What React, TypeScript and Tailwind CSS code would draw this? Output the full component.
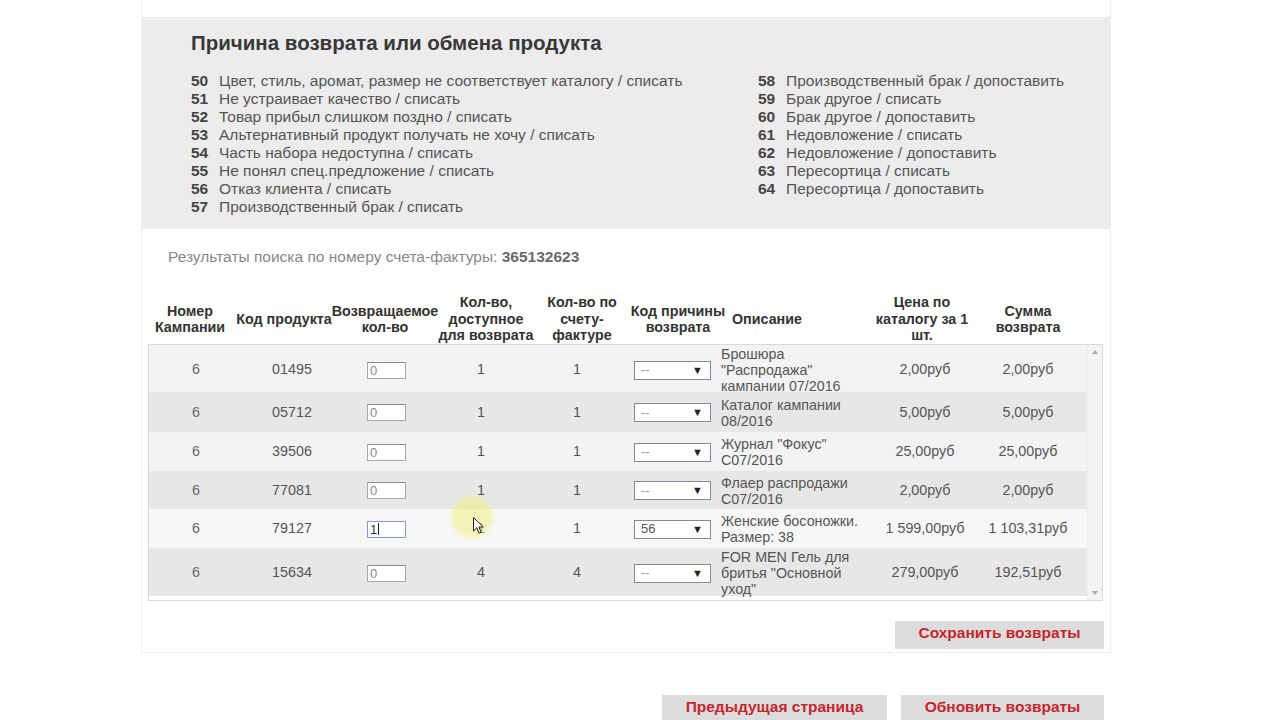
import React from 'react';

type Row = {
  c: string;
  code: string;
  q: string;
  avail: string;
  inv: string;
  reason: string;
  desc: string[];
  price: string;
  sum: string;
  h: string;
  bg: string;
  focus?: boolean;
};

const rows: Row[] = [
  { c: '6', code: '01495', q: '0', avail: '1', inv: '1', reason: '--', desc: ['Брошюра', '"Распродажа"', 'кампании 07/2016'], price: '2,00руб', sum: '2,00руб', h: 'h-[47px]', bg: 'bg-[#f3f3f3]' },
  { c: '6', code: '05712', q: '0', avail: '1', inv: '1', reason: '--', desc: ['Каталог кампании', '08/2016'], price: '5,00руб', sum: '5,00руб', h: 'h-[40px]', bg: 'bg-[#e7e7e7]' },
  { c: '6', code: '39506', q: '0', avail: '1', inv: '1', reason: '--', desc: ['Журнал "Фокус"', 'C07/2016'], price: '25,00руб', sum: '25,00руб', h: 'h-[39px]', bg: 'bg-[#f3f3f3]' },
  { c: '6', code: '77081', q: '0', avail: '1', inv: '1', reason: '--', desc: ['Флаер распродажи', 'C07/2016'], price: '2,00руб', sum: '2,00руб', h: 'h-[38px]', bg: 'bg-[#e7e7e7]' },
  { c: '6', code: '79127', q: '1', avail: '1', inv: '1', reason: '56', desc: ['Женские босоножки.', 'Размер: 38'], price: '1 599,00руб', sum: '1 103,31руб', h: 'h-[39px]', bg: 'bg-[#f7f7f7]', focus: true },
  { c: '6', code: '15634', q: '0', avail: '4', inv: '4', reason: '--', desc: ['FOR MEN Гель для', 'бритья "Основной', 'уход"'], price: '279,00руб', sum: '192,51руб', h: 'h-[48px]', bg: 'bg-[#e7e7e7]' },
];

const left = [
  ['50', 'Цвет, стиль, аромат, размер не соответствует каталогу / списать'],
  ['51', 'Не устраивает качество / списать'],
  ['52', 'Товар прибыл слишком поздно / списать'],
  ['53', 'Альтернативный продукт получать не хочу / списать'],
  ['54', 'Часть набора недоступна / списать'],
  ['55', 'Не понял спец.предложение / списать'],
  ['56', 'Отказ клиента / списать'],
  ['57', 'Производственный брак / списать'],
];
const right = [
  ['58', 'Производственный брак / допоставить'],
  ['59', 'Брак другое / списать'],
  ['60', 'Брак другое / допоставить'],
  ['61', 'Недовложение / списать'],
  ['62', 'Недовложение / допоставить'],
  ['63', 'Пересортица / списать'],
  ['64', 'Пересортица / допоставить'],
];

function ReasonList({ items }: { items: string[][] }) {
  return (
    <div className="flex flex-col">
      {items.map(([n, t]) => (
        <div key={n} className="flex h-[18px] items-center whitespace-nowrap text-[15.5px] leading-[18px]">
          <span className="w-[28px] font-bold text-[#444]">{n}</span>
          <span className="text-[#555]">{t}</span>
        </div>
      ))}
    </div>
  );
}

const headers: React.ReactNode[] = [
  <>Номер<br />Кампании</>,
  <>Код продукта</>,
  <>Возвращаемое<br />кол-во</>,
  <>Кол-во,<br />доступное<br />для возврата</>,
  <>Кол-во по<br />счету-<br />фактуре</>,
  <>Код причины<br />возврата</>,
  <>Описание</>,
  <>Цена по<br />каталогу за 1<br />шт.</>,
  <>Сумма<br />возврата</>,
];

function RedButton({ label, cls }: { label: string; cls: string }) {
  return (
    <div className={`${cls} flex items-center justify-center bg-[#dcdcdc] text-[15.5px] font-bold whitespace-nowrap text-[#c4262e]`}>
      {label}
    </div>
  );
}

export default function App() {
  return (
    <div className="relative h-[720px] w-[1280px] overflow-hidden bg-white font-['Liberation_Sans',Arial,sans-serif]">
      <div className="ml-[141px] flex w-[970px] flex-col border-x border-b border-[#eeeeee] pt-[17px] pb-[3px]">
        {/* Reasons panel */}
        <div className="bg-[#ececec] pt-[14px] pb-[13px] pl-[49px]">
          <div className="text-[20.5px] font-bold leading-[24px] text-[#383838]">Причина возврата или обмена продукта</div>
          <div className="mt-[17px] grid grid-cols-[567px_1fr]">
            <ReasonList items={left} />
            <ReasonList items={right} />
          </div>
        </div>

        {/* Results */}
        <div className="mt-[19px] pl-[26px] text-[15.5px] leading-[18px] text-[#888]">
          Результаты поиска по номеру счета-фактуры: <span className="font-bold text-[#6a6a6a]">365132623</span>
        </div>

        {/* Table header */}
        <div className="mt-[28px] ml-[4px] grid h-[50px] grid-cols-[88px_100px_102px_100px_92px_100px_138px_112px_100px] items-center text-[14.3px] font-bold leading-[16.5px] text-[#333]">
          {headers.map((h, i) => (
            <div key={i} className={i === 6 ? 'pl-[4px] text-left' : 'flex justify-center whitespace-nowrap text-center'}>
              <div>{h}</div>
            </div>
          ))}
        </div>

        {/* Table body */}
        <div className="ml-[6px] flex w-[955px] border border-[#d9d9d9] bg-white">
          <div className="flex flex-1 flex-col pb-[4px]">
            {rows.map((r, i) => (
              <div
                key={i}
                className={`${r.h} ${r.bg} grid grid-cols-[94px_98px_91px_98px_94px_92px_150px_118px_88px_1fr] items-center pt-[1px] text-[14.3px] text-[#555]`}
              >
                <div className="text-center text-[#666]">{r.c}</div>
                <div className="text-center">{r.code}</div>
                <div className="flex justify-center">
                  <div
                    className={`flex h-[17px] w-[39px] items-center border bg-white pl-[2px] text-[13px] leading-none ${
                      r.focus ? 'border-[#7b9fd6] text-[#333]' : 'border-[#a8a8a8] border-t-[#8c8c8c] text-[#888]'
                    }`}
                  >
                    {r.q}
                    {r.focus && <span className="ml-[1px] h-[12px] w-px bg-[#222]" />}
                  </div>
                </div>
                <div className="text-center">{r.avail}</div>
                <div className="text-center">{r.inv}</div>
                <div className="pl-[10px]">
                  <div className="flex h-[19px] w-[77px] items-center justify-between border border-[#7d8b98] bg-white pr-[7px] pl-[6px] text-[13px]">
                    <span className={r.reason === '--' ? 'text-[#9a9a9a]' : 'text-[#555]'}>{r.reason}</span>
                    <span className="text-[11px] text-[#222]">▼</span>
                  </div>
                </div>
                <div className="pl-[5px] leading-[16px]">
                  {r.desc.map((d, j) => (
                    <div key={j} className="whitespace-nowrap">{d}</div>
                  ))}
                </div>
                <div className="flex justify-center whitespace-nowrap">{r.price}</div>
                <div className="flex justify-center whitespace-nowrap">{r.sum}</div>
                <div />
              </div>
            ))}
          </div>
          {/* scrollbar */}
          <div className="flex w-[15px] flex-col items-center justify-between border-l border-[#ececec] bg-[#f4f4f4] py-[5px]">
            <svg width="6" height="4" viewBox="0 0 6 4"><path d="M3 0 L6 4 L0 4 Z" fill="#a8a8a8" /></svg>
            <svg width="6" height="4" viewBox="0 0 6 4"><path d="M0 0 L6 0 L3 4 Z" fill="#a8a8a8" /></svg>
          </div>
        </div>

        {/* Save */}
        <div className="mt-[20px] mr-[6px] flex justify-end">
          <RedButton label="Сохранить возвраты" cls="w-[209px] h-[28px] pb-[4px]" />
        </div>
      </div>

      {/* Bottom buttons */}
      <div className="mt-[42px] ml-[662px] flex gap-[14px]">
        <RedButton label="Предыдущая страница" cls="w-[225px] h-[30px] pb-[6px]" />
        <RedButton label="Обновить возвраты" cls="w-[203px] h-[30px] pb-[6px]" />
      </div>

      {/* cursor highlight overlay */}
      <div className="pointer-events-none absolute left-[451px] top-[496px] h-[42px] w-[42px] rounded-full bg-[#f4ee7a] opacity-50 blur-[2px]" />
      <svg className="pointer-events-none absolute left-[473px] top-[517px]" width="12" height="18" viewBox="0 0 12 18">
        <path d="M0.5 0.5 L0.5 14 L3.8 10.8 L6.2 16.2 L8.2 15.3 L5.9 10 L10.3 10 Z" fill="#fff" stroke="#222" strokeWidth="1" />
      </svg>
    </div>
  );
}
